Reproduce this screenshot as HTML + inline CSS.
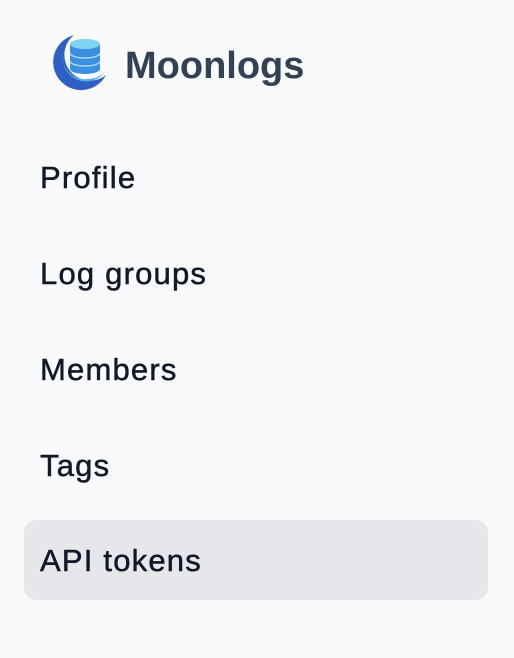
<!DOCTYPE html>
<html><head><style>
body{margin:0;width:514px;height:658px;background:#f9fafb;font-family:"Liberation Sans",sans-serif;position:relative;overflow:hidden}
.t{position:absolute;left:125px;top:41px;font-size:38px;font-weight:bold;color:#334155;line-height:50px}
.n{position:absolute;left:24px;width:464px;height:80px;border-radius:12px;font-size:31px;color:#111827;line-height:82px;box-sizing:border-box;padding-left:16px;letter-spacing:1.2px;-webkit-text-stroke:0.5px #111827}
.a{background:#e5e7eb}
</style></head><body>
<svg style="position:absolute;left:48px;top:33px" width="62" height="60" viewBox="0 0 62 60">
<path d="M26 2 A28 28 0 1 0 58 42 A24 24 0 0 1 26 2Z" fill="#2f5fc4"/>
<path d="M20 10 A22 22 0 0 0 40 46 A26 26 0 0 0 56 40 A22 22 0 0 1 20 10Z" fill="#4cb0e0"/>
<ellipse cx="37" cy="11" rx="15" ry="5" fill="#7dd3f0"/>
<path d="M22 11 v25 a15 5 0 0 0 30 0 v-25 a15 5 0 0 1 -30 0z" fill="#3b8fe0"/>
<path d="M22 20 a15 5 0 0 0 30 0 M22 28 a15 5 0 0 0 30 0" stroke="#a8dcf5" stroke-width="1.5" fill="none"/>
</svg>
<div class="t">Moonlogs</div>
<div class="n" style="top:137px">Profile</div>
<div class="n" style="top:233px">Log groups</div>
<div class="n" style="top:329px">Members</div>
<div class="n" style="top:425px">Tags</div>
<div class="n a" style="top:520px">API tokens</div>
</body></html>
